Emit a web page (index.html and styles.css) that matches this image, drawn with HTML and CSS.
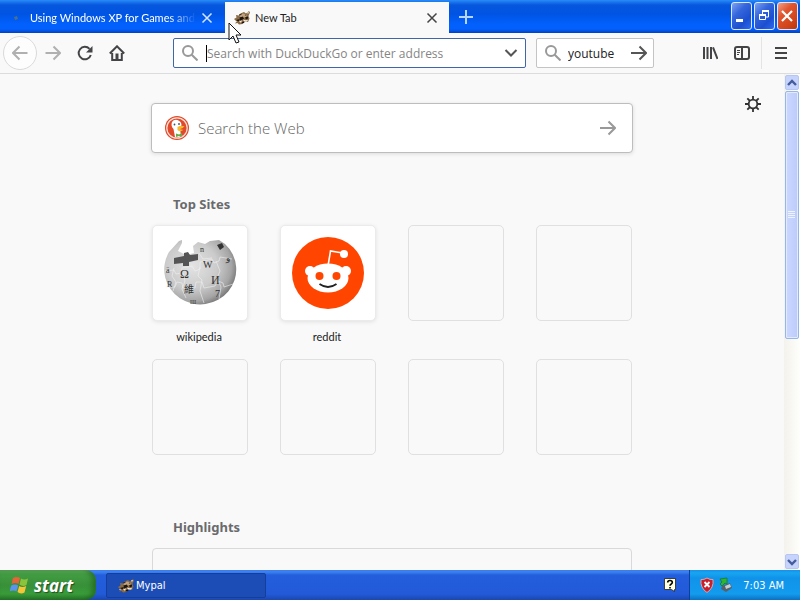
FILE: index.html
```html
<!DOCTYPE html>
<html lang="en">
<head>
<meta charset="utf-8">
<title>New Tab - Mypal</title>
<link rel="stylesheet" href="styles.css">
</head>
<body>
<svg class="defs" aria-hidden="true">
  <defs>
    <symbol id="mypal" viewBox="0 0 16 16">
      <path d="M0 9l2.500-1.500L2 5l3 .5 1.500-2L10 2l2 1.500L15 1l1 1.500L14.500 6l1 2.500L14 12l-3.500-.5L8.500 14 5 14.500 3.500 13 1 13.500l1.500-2L1 10z" fill="#8a6c48"/>
      <path d="M5 6l4-2.500 4 1-1 2.500-4 1z" fill="#c2a27a"/>
      <path d="M5.500 7.500L9 6.500l1 2.500-4 1.500zM11 7.500l3-1v2l-2 1zM2 10l4-1-1.500 2.500zM8 12l3-1-1 2-2.500.5z" fill="#1b1411"/>
      <path d="M9 9.500l2.500.8L14 10l-1 1.500-3 0zM5 11.500l3-1-1 2.200zM13 2.500L15 2l-1 2zM1 11l2 0-1 1z" fill="#f9efdc"/>
      <path d="M5 4.500L8 3.500 7 5 5 5.500zM10.500 5l2-.8-.5 1.500z" fill="#3b2a20"/>
    </symbol>
  </defs>
</svg>

<header class="titlebar">
  <div class="tab tab-idle">
    <svg class="tab-icon" viewBox="0 0 16 16" aria-hidden="true"><path d="M5 7l3-1 1 3-3 1z" fill="#48708f"/></svg>
    <span class="tab-title">Using Windows XP for Games and I</span>
    <button class="tab-close" aria-label="Close tab"><svg viewBox="0 0 12 12"><path d="M1.500 1.500l9 9M10.500 1.500l-9 9"/></svg></button>
  </div>
  <div class="tab tab-active">
    <svg class="tab-icon" viewBox="0 0 16 16" aria-hidden="true"><use href="#mypal"/></svg>
    <span class="tab-title">New Tab</span>
    <button class="tab-close" aria-label="Close tab"><svg viewBox="0 0 12 12"><path d="M1.500 1.500l9 9M10.500 1.500l-9 9"/></svg></button>
  </div>
  <button class="tab-new" aria-label="New tab"><svg viewBox="0 0 14 14"><path d="M7 0v14M0 7h14"/></svg></button>
  <div class="window-controls">
    <button class="win" aria-label="Minimize"><svg viewBox="0 0 21 26"><path d="M5 16h7v3H5z" fill="#fff"/></svg></button>
    <button class="win" aria-label="Restore"><svg viewBox="0 0 21 26"><path d="M8.500 11V8h6v6h-3M5.500 11.500h6v5h-6z" fill="none" stroke="#fff"/><path d="M8 7h7v2H8zM5 11h7v2H5z" fill="#fff"/></svg></button>
    <button class="win win-close" aria-label="Close"><svg viewBox="0 0 21 26"><path d="M5 8l10 10M15 8L5 18" stroke="#fff" stroke-width="2.200"/></svg></button>
  </div>
</header>

<nav class="toolbar">
  <button class="tool tool-back" aria-label="Back"><svg viewBox="0 0 16 16"><path d="M15.500 8H1M7.500 1.500L1 8l6.500 6.500"/></svg></button>
  <button class="tool tool-forward" aria-label="Forward"><svg viewBox="0 0 16 16"><path d="M.5 8H15M8.500 1.500L15 8l-6.500 6.500"/></svg></button>
  <button class="tool" aria-label="Reload"><svg viewBox="0 0 16 16"><path d="M13.800 10A6.200 6.200 0 1 1 12.500 3.900"/><path d="M15.500 1v6.500H9z" class="solid"/></svg></button>
  <button class="tool" aria-label="Home"><svg viewBox="0 0 16 16"><path d="M.8 8.500L8 1.300l7.200 7.200M3.200 8v7h9.600V8"/><path d="M6.500 8.500h3V15h-3z" class="solid"/></svg></button>
  <div class="field address">
    <svg class="lens" viewBox="0 0 16 16" aria-hidden="true"><circle cx="6" cy="6" r="5"/><path d="M9.700 9.700L15.500 15.500"/></svg>
    <span class="caret"></span>
    <input type="text" aria-label="Address" placeholder="Search with DuckDuckGo or enter address">
    <button class="field-button" aria-label="Show history"><svg viewBox="0 0 16 16"><path d="M2.500 5L8 10.500 13.500 5"/></svg></button>
  </div>
  <div class="field search">
    <svg class="lens" viewBox="0 0 16 16" aria-hidden="true"><circle cx="6" cy="6" r="5"/><path d="M9.700 9.700L15.500 15.500"/></svg>
    <input type="text" aria-label="Search" value="youtube">
    <button class="field-button" aria-label="Go"><svg viewBox="0 0 16 16"><path d="M0 8h15M8.500 1.500L15 8l-6.500 6.500"/></svg></button>
  </div>
  <div class="tools-end">
    <button class="tool" aria-label="Library"><svg viewBox="0 0 16 16"><path d="M2 2v12M5.500 2v12M9 2v12M11 2.300L15.500 14"/></svg></button>
    <button class="tool" aria-label="Sidebars"><svg viewBox="0 0 16 16"><rect x="1" y="2" width="14" height="12" rx="2"/><path d="M8 2v12"/><path d="M3 5.500h3M3 7.500h3M3 9.500h2" class="thin"/></svg></button>
  </div>
  <button class="tool tool-menu" aria-label="Menu"><svg viewBox="0 0 16 16"><path d="M2 3h12M2 8h12M2 13h12"/></svg></button>
</nav>

<div class="viewport">
  <main class="page">
    <button class="prefs" aria-label="Customize page"><svg viewBox="0 0 16 16"><circle cx="8" cy="8" r="4.300"/><path d="M8 0v4M8 12v4M0 8h4M12 8h4M2.300 2.300l2.700 2.700M11 11l2.700 2.700M13.700 2.300L11 5M5 11l-2.700 2.700"/></svg></button>
    <div class="column">
      <form class="web-search">
        <svg class="duck" viewBox="0 0 24 24" aria-hidden="true"><circle cx="12" cy="12" r="12" fill="#e0492a"/><circle cx="12" cy="12" r="10.200" fill="none" stroke="#fbe3da" stroke-width="1.200"/><path d="M7 6q2-3 5.500-2 4 1.500 4 5l-1.500 4 1 7q-3 2-6 1L8.500 13Q5.500 10 7 6z" fill="#fff"/><path d="M12.500 11q4-2 7-.5-2 2-5 2.500 2 1 4 .8-3 2.700-6 .2z" fill="#f7b92c"/><path d="M11 17.500l3 1 3-1.500v3.500l-3-.5-3 1z" fill="#67a947"/><circle cx="9.500" cy="8.500" r=".9" fill="#3b5364"/><circle cx="14" cy="8" r=".9" fill="#3b5364"/></svg>
        <input type="search" aria-label="Search the Web" placeholder="Search the Web">
        <button type="button" class="web-go" aria-label="Search"><svg viewBox="0 0 16 16"><path d="M0 8h15M8.500 1.500L15 8l-6.500 6.500"/></svg></button>
      </form>

      <h2>Top Sites</h2>
      <div class="sites">
        <a class="site" href="#wikipedia">
          <span class="tile tile-filled">
            <svg viewBox="0 0 74 74" aria-hidden="true">
              <defs>
                <radialGradient id="globe" cx=".38" cy=".4" r=".65"><stop offset="0" stop-color="#e4e4e4"/><stop offset=".55" stop-color="#cbcbcb"/><stop offset=".85" stop-color="#a5a5a5"/><stop offset="1" stop-color="#777"/></radialGradient>
              </defs>
              <path d="M6 16L16 5l3-1 0 3-4 8 8 4 8-2-1-7 5-4 7 2 5-3 9-1 6 4a36 35 0 1 1-56 8z" fill="url(#globe)"/>
              <path d="M11 22l10-2 0-3 4-1 2 3 8-1 0 6-9 2 0 4-6 0 0-3-9 1z" fill="#555"/>
              <g fill="none" stroke="#f0f0f0" stroke-width=".6">
                <path d="M2 35l9-1 2 4 5-1 1-5 10-2 3 5 5-2 0-7 12-3 2 4 5-2 1-4 12 2M3 51l9 0 2-5 5 1 1 5 12 0 1-6 6 0 2 6 11-2 3-5 5 2 1 4 9-3M20 37l2 8-3 8 4 9M37 31l-2 9 4 4-2 11 4 12M53 25l4 10-3 7 4 9-2 12M11 32l-2 8 4 6-3 9M36 17l4 6 9-1"/>
              </g>
              <g class="globe-letters">
                <text x="17" y="42" font-size="12">Ω</text>
                <text x="40" y="32" font-size="10">W</text>
                <text x="48" y="48" font-size="12">И</text>
                <text x="21" y="57" font-size="10">維</text>
                <text x="52" y="61" font-size="10">7</text>
                <text x="63" y="25" font-size="9">و</text>
                <text x="3" y="37" font-size="8">ä</text>
                <text x="4" y="51" font-size="8">R</text>
                <text x="37" y="16" font-size="8">n</text>
                <text x="27" y="68" font-size="6">Ш</text>
                <path d="M54 9l5-2 2 4-4 3z"/>
              </g>
            </svg>
          </span>
          <span class="site-name">wikipedia</span>
        </a>
        <a class="site" href="#reddit">
          <span class="tile tile-filled">
            <svg viewBox="0 0 74 74" aria-hidden="true">
              <circle cx="37" cy="37" r="36" fill="#ff4500"/>
              <path d="M37 30l2.500-15 12 2" fill="none" stroke="#fff" stroke-width="1.600"/>
              <circle cx="53" cy="18" r="4" fill="#fff"/>
              <circle cx="19" cy="35" r="5" fill="#fff"/><circle cx="55" cy="35" r="5" fill="#fff"/>
              <ellipse cx="37" cy="42" rx="20.500" ry="14.500" fill="#fff"/>
              <circle cx="28.500" cy="40" r="4" fill="#ff4500"/><circle cx="45.500" cy="40" r="4" fill="#ff4500"/>
              <path d="M28.500 48q8.500 6 17 0" fill="none" stroke="#222" stroke-width="1.800"/>
            </svg>
          </span>
          <span class="site-name">reddit</span>
        </a>
        <div class="site"><span class="tile"></span></div>
        <div class="site"><span class="tile"></span></div>
        <div class="site"><span class="tile"></span></div>
        <div class="site"><span class="tile"></span></div>
        <div class="site"><span class="tile"></span></div>
        <div class="site"><span class="tile"></span></div>
      </div>

      <h2>Highlights</h2>
      <div class="highlight-card"></div>
    </div>
  </main>
  <div class="scrollbar">
    <button class="scroll-button" aria-label="Scroll up"><svg viewBox="0 0 14 14"><path d="M3 9l4-4 4 4"/></svg></button>
    <div class="thumb"><svg viewBox="0 0 8 8" aria-hidden="true"><path d="M0 .5h7M0 2.500h7M0 4.500h7M0 6.500h7"/></svg></div>
    <button class="scroll-button scroll-down" aria-label="Scroll down"><svg viewBox="0 0 14 14"><path d="M3 5l4 4 4-4"/></svg></button>
  </div>
</div>

<footer class="taskbar">
  <button class="start">
    <svg viewBox="0 0 20 20" aria-hidden="true"><path d="M3 3q4-2 7 0L8.500 9q-3-2-7 0z" fill="#e8623a"/><path d="M11 3.500q3 2 7 0L16.500 10q-4 2-7-.5z" fill="#8bc43c"/><path d="M1.200 10.500q4-2 7 0L6.500 16.500q-3-2-7 0z" fill="#5b93ee"/><path d="M9.200 11q3 2 7 0L14.500 17.500q-4 2-7-.5z" fill="#f6c638"/></svg>
    <span>start</span>
  </button>
  <button class="task"><svg viewBox="0 0 16 16" aria-hidden="true"><use href="#mypal"/></svg>Mypal</button>
  <button class="help" aria-label="Help"><svg viewBox="0 0 14 16"><path d="M1.500 1.500h11v11h-1v2l-3-2h-7z" fill="#ffffe1" stroke="#222" stroke-width=".8"/><path d="M4.700 5.500q0-2 2.300-2t2.300 2q0 1-1.300 1.700-1 .6-1 1.600M7 10v1.600" fill="none" stroke="#000" stroke-width="1.600"/></svg></button>
  <div class="tray">
    <svg viewBox="0 0 16 16" aria-hidden="true"><path d="M8 1q3 2 6 1.500Q15 11 8 15.500 1 11 2 2.500 5 3 8 1z" fill="#c81f2b" stroke="#d9a3ac"/><path d="M5.500 5l5 5M10.500 5l-5 5" stroke="#fff" stroke-width="1.800"/></svg>
    <svg viewBox="0 0 16 16" aria-hidden="true"><path d="M4 9l8-3 2 5-6 4-5-3z" fill="#56616a"/><path d="M7 9l5-2 1 3-5 2z" fill="#c5d0d2"/><path d="M2 2l7-1 0 6-2-1-3 3-2-2 2-2z" fill="#2fb52e" stroke="#126c1d" stroke-width=".6"/></svg>
    <time>7:03 AM</time>
  </div>
</footer>

<svg class="cursor" viewBox="0 0 14 22" aria-hidden="true"><path d="M1 1v17l4-4 3 7 3-1-3-7h5z" fill="#fff" stroke="#111"/></svg>
</body>
</html>
```

FILE: styles.css
```css
* { box-sizing: border-box; }

body {
  display: flex;
  flex-direction: column;
  height: 100vh;
  margin: 0;
  overflow: hidden;
  background: #f9f9fa;
  color: #222;
  font-family: "DejaVu Sans Condensed", "Noto Sans", sans-serif;
  font-size: 11px;
}

button {
  display: flex;
  align-items: center;
  justify-content: center;
  flex: none;
  margin: 0;
  padding: 0;
  border: 0;
  background: none;
  color: inherit;
  font: inherit;
}

input {
  flex: 1;
  min-width: 0;
  padding: 0;
  border: 0;
  outline: 0;
  background: none;
  color: #222;
  font: inherit;
}

svg { flex: none; display: block; }
.defs { position: absolute; width: 0; height: 0; }

/* Title bar and tabs */
.titlebar {
  display: flex;
  flex: none;
  height: 33px;
  background: linear-gradient(#2a8cf5 0, #1a76f0 2px, #0757dc 5px, #0054e3 14px, #0260fc 24px, #0260fc 29px, #0141c0 33px);
}

.tab {
  display: flex;
  align-items: center;
  flex: none;
  width: 224px;
  margin-top: 2px;
  padding: 0 11px 0 9px;
  gap: 5px;
  font-family: Lato, sans-serif;
}
.tab-idle { width: 225px; padding-right: 12px; color: #fff; }
.tab-active { background: #f9f9fa; color: #222; }
.tab-icon { width: 16px; height: 16px; }
.tab-title { flex: 1; overflow: hidden; white-space: nowrap; }
.tab-idle .tab-title { mask-image: linear-gradient(to right, #000 84%, transparent); }
.tab-close { width: 12px; height: 12px; color: #444; }
.tab-idle .tab-close { color: #d6e6ff; }
.tab-close svg { width: 12px; height: 12px; fill: none; stroke: currentColor; stroke-width: 1.5; }
.tab-new { width: 34px; color: #b5d6ff; }
.tab-new svg { width: 14px; height: 14px; stroke: currentColor; stroke-width: 2; }

.window-controls { display: flex; gap: 2px; margin: 2px 2px 3px auto; }
.win {
  width: 21px;
  border: 1px solid #dce8ff;
  border-radius: 3px;
  background: linear-gradient(135deg, #7ea3f2, #3566dc 35%, #1c4fd0 70%, #2e6bf0);
}
.win-close { background: linear-gradient(135deg, #f0a087, #e0552f 35%, #d04318 75%, #b9370f); }
.win svg { width: 21px; height: 26px; }

/* Navigation toolbar */
.toolbar {
  display: flex;
  align-items: center;
  flex: none;
  height: 41px;
  padding: 0 0 0 3px;
  border-bottom: 1px solid #dcdcde;
  background: #f9f9fa;
}
.tool { width: 32px; height: 32px; color: #444447; }
.tool svg { width: 16px; height: 16px; fill: none; stroke: currentColor; stroke-width: 2; }
.tool .solid { fill: currentColor; stroke: none; }
.tool .thin { stroke-width: 1; }
.tool-back { width: 34px; height: 34px; border: 1px solid #dadada; border-radius: 50%; background: #fdfdfd; }
.tool-back, .tool-forward { color: #b0b0b0; }

.field {
  display: flex;
  align-items: center;
  height: 30px;
  border: 1px solid #c4c4c6;
  border-radius: 2px;
  background: #fff;
  padding: 0 6px 0 8px;
  font-family: "Open Sans", sans-serif;
  font-size: 12px;
}
.address { flex: 1; margin-left: 40px; border-color: #4066a8; }
.address input::placeholder { color: #858585; opacity: 1; }
.search { width: 118px; margin-left: 10px; }
.search input { margin-left: 7px; }
.lens { width: 16px; height: 16px; fill: none; stroke: #999; stroke-width: 2; }
.caret { width: 1px; height: 17px; margin-left: 8px; background: #000; }
.field-button { width: 16px; height: 16px; color: #555; }
.field-button svg { width: 16px; height: 16px; fill: none; stroke: currentColor; stroke-width: 2; }
.tools-end { display: flex; margin-left: 40px; padding-right: 3px; border-right: 1px solid #e4e4e5; }
.tool-menu { width: 38px; }

/* New tab page */
.viewport { display: flex; flex: 1; min-height: 0; }
.page { position: relative; flex: 1; overflow: hidden; background: #f9f9fa; font-family: "Noto Sans", sans-serif; }
.prefs { position: absolute; top: 22px; right: 23px; width: 16px; height: 16px; }
.prefs svg { width: 16px; height: 16px; fill: none; stroke: #333; stroke-width: 1.8; }
.column { width: 480px; margin: 0 auto; padding-top: 29px; }

.web-search {
  display: flex;
  align-items: center;
  gap: 9px;
  height: 50px;
  margin: 0 -1px;
  padding: 0 16px 0 13px;
  border: 1px solid #bdbdbf;
  border-radius: 4px;
  background: #fff;
  box-shadow: 0 1px 4px rgba(0, 0, 0, 0.12);
}
.web-search input { appearance: none; font-family: "Open Sans", sans-serif; font-size: 15px; font-weight: 300; }
.web-search input::placeholder { color: #666; opacity: 1; }
.duck { width: 24px; height: 24px; }
.web-go svg { width: 16px; height: 16px; fill: none; stroke: #999; stroke-width: 2; }

h2 {
  margin: 41px 0 11px 21px;
  color: #6a6a6c;
  font-size: 13px;
  font-weight: 700;
  line-height: 20px;
}

.sites { display: grid; grid-template-columns: repeat(4, 96px); gap: 6px 32px; }
.site { height: 128px; color: #222; text-align: center; text-decoration: none; }
.tile {
  display: flex;
  align-items: center;
  justify-content: center;
  height: 96px;
  border: 1px solid #e0e0e2;
  border-radius: 5px;
}
.tile-filled { border-color: #ebebec; background: #fff; box-shadow: 0 1px 4px rgba(0, 0, 0, 0.1); }
.tile svg { width: 74px; height: 74px; }
.globe-letters { fill: #333; font-family: "Liberation Serif", "Noto Sans CJK SC", serif; }
.site-name { display: block; margin: 8px 2px 0 0; font-family: Lato, sans-serif; line-height: 16px; }
.sites + h2 { margin-top: 30px; }
.highlight-card { height: 200px; border: 1px solid #d9d9db; border-radius: 4px; }

/* Scroll bar */
.scrollbar {
  display: flex;
  flex-direction: column;
  flex: none;
  width: 16px;
  padding: 1px 1px 0;
  background: linear-gradient(to right, #f3f2ec, #fefefb);
}
.scroll-button { width: 14px; height: 15px; border: 1px solid #b5c6f5; border-radius: 2px; background: #c6d3fc; }
.scroll-button svg { width: 14px; height: 14px; fill: none; stroke: #455c9c; stroke-width: 2.4; }
.thumb {
  display: flex;
  align-items: center;
  justify-content: center;
  height: 50%;
  margin-top: 1px;
  border: 1px solid #98b5e8;
  border-radius: 2px;
  background: linear-gradient(to right, #cbd8ff, #bccbfa);
  box-shadow: inset 0 0 0 1px #e1eaff;
}
.thumb svg { width: 8px; height: 8px; stroke: #eef4ff; }
.scroll-down { margin-top: auto; margin-bottom: 1px; }

/* Taskbar */
.taskbar {
  display: flex;
  flex: none;
  height: 30px;
  background: linear-gradient(#3a7bea 0, #3b83f0 2px, #245edc 5px, #225ad8 24px, #1b47ae 30px);
  color: #fff;
}
.start {
  justify-content: flex-start;
  width: 96px;
  padding-left: 10px;
  gap: 4px;
  border-radius: 0 10px 10px 0;
  background: linear-gradient(#65ad65 0, #439d43 4px, #389038 15px, #399b39 24px, #27752b 30px);
  box-shadow: inset -4px 0 5px rgba(20, 80, 20, 0.5);
  font-family: "Open Sans", sans-serif;
  font-size: 17px;
  font-style: italic;
  font-weight: 700;
  text-shadow: 1px 1px 1px #234f23;
}
.start svg { width: 20px; height: 20px; }
.task {
  justify-content: flex-start;
  width: 160px;
  margin: 3px 0 2px 10px;
  padding-left: 11px;
  gap: 2px;
  border: 1px solid #153e9c;
  border-radius: 2px;
  background: #1c4db6;
}
.task svg { width: 16px; height: 16px; }
.help { margin-left: auto; }
.help svg { width: 14px; height: 16px; }
.tray {
  display: flex;
  align-items: center;
  margin-left: 12px;
  padding: 0 16px 0 9px;
  gap: 3px;
  border-left: 1px solid #0d3d9b;
  background: linear-gradient(#1790e8 0, #19a5f0 3px, #0f93ea 8px, #139bee 24px, #0d70c0 30px);
}
.tray svg { width: 16px; height: 16px; }
.tray time { margin-left: 6px; }

/* Pointer over the tab strip */
.cursor { position: absolute; left: 228px; top: 22px; width: 14px; height: 22px; }
```
